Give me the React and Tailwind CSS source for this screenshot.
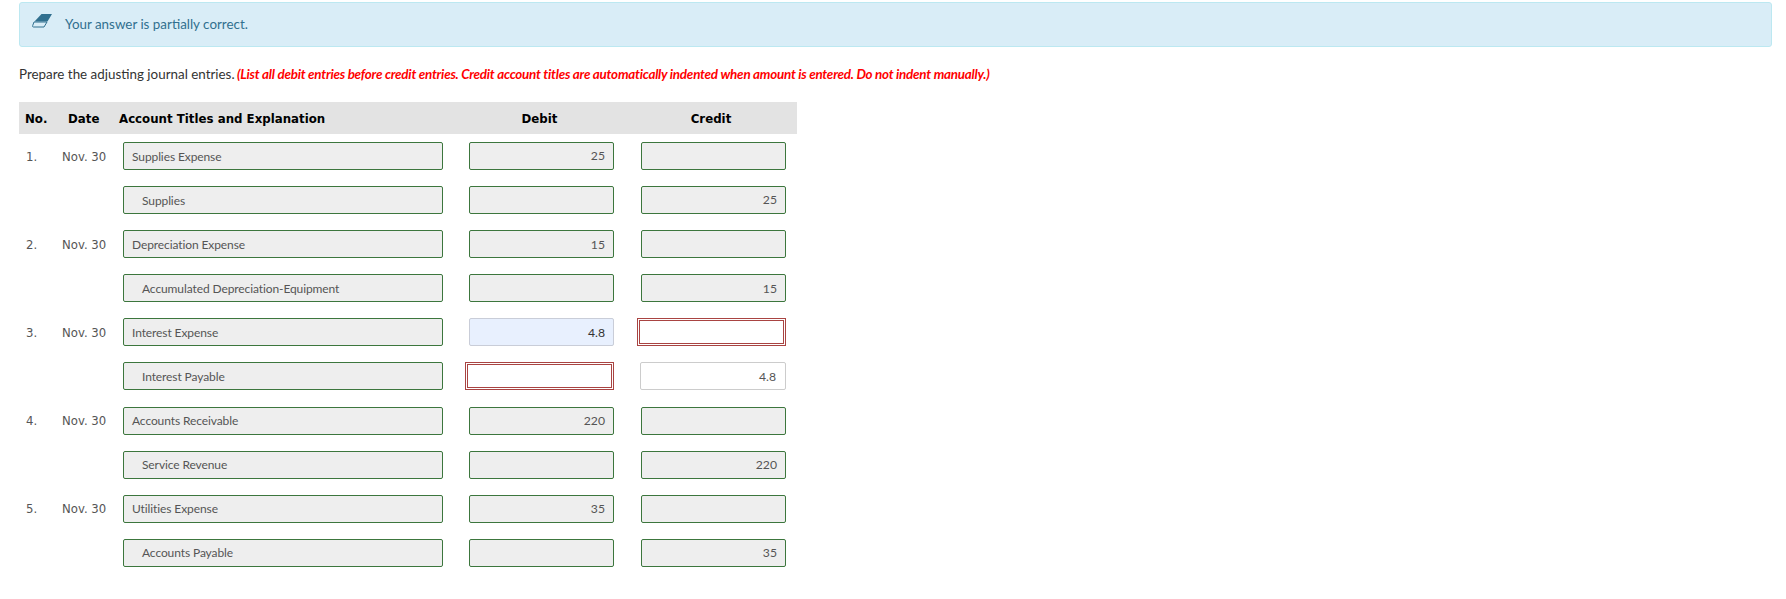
import React from "react";

const rows = [
  { no: "1.", date: "Nov. 30", title: "Supplies Expense", debit: "25", credit: "" },
  { title: "Supplies", indent: true, debit: "", credit: "25" },
  { no: "2.", date: "Nov. 30", title: "Depreciation Expense", debit: "15", credit: "" },
  { title: "Accumulated Depreciation-Equipment", indent: true, debit: "", credit: "15" },
  { no: "3.", date: "Nov. 30", title: "Interest Expense", debit: "4.8", credit: "", debitState: "edited", creditState: "wrong" },
  { title: "Interest Payable", indent: true, debit: "", credit: "4.8", debitState: "wrong", creditState: "plain" },
  { no: "4.", date: "Nov. 30", title: "Accounts Receivable", debit: "220", credit: "" },
  { title: "Service Revenue", indent: true, debit: "", credit: "220" },
  { no: "5.", date: "Nov. 30", title: "Utilities Expense", debit: "35", credit: "" },
  { title: "Accounts Payable", indent: true, debit: "", credit: "35" },
];

function Amount({ value, state }) {
  if (state === "wrong") {
    return <div className="h-[28px] w-[149px] border-[3px] border-double border-[#a94442] bg-white" />;
  }
  if (state === "edited") {
    return (
      <div className="flex h-[28px] w-[145px] items-center justify-end rounded-[2px] border border-[#c9cdd8] bg-[#e8f0fe] pr-[8px] pt-[1px] text-[12.2px] text-[#333]">
        {value}
      </div>
    );
  }
  if (state === "plain") {
    return (
      <div className="flex h-[28px] w-[146px] items-center justify-end rounded-[2px] border border-[#ccc] bg-white pr-[9px] pt-[1px] text-[12.2px] text-[#555]">
        {value}
      </div>
    );
  }
  return (
    <div className="flex h-[28px] w-[145px] items-center justify-end rounded-[2px] border border-[#3c763d] bg-[#eee] pr-[8px] pt-[1px] text-[12.2px] text-[#555]">
      {value}
    </div>
  );
}

export default function App() {
  return (
    <div className="min-h-[599px] bg-white px-[19px] pt-[2px] font-['Lato',sans-serif] text-[#333]">
      <div className="flex h-[45px] w-[1753px] items-center rounded-[3px] border border-[#bce8f1] bg-[#d9edf7] pl-[12px] text-[13.4px] text-[#31708f]">
        <svg width="20" height="14" viewBox="0 0 20 14" className="mr-[13px] mt-[-8px] shrink-0">
          <path d="M9.5 0H20L15.5 7.5H2.5Z" fill="#31708f" />
          <path d="M2 8H15L12 13H1.5Q0.2 13 0.7 11.5Z" fill="none" stroke="#31708f" strokeWidth="1" />
        </svg>
        <span>Your answer is partially correct.</span>
      </div>

      <p className="mt-[17px] h-[20px] text-[13.4px] leading-[20px] whitespace-nowrap">
        Prepare the adjusting journal entries.{" "}
        <em className="ml-[-1px] font-bold tracking-[-0.24px] text-[#ff0000]">
          (List all debit entries before credit entries. Credit account titles are automatically indented when amount is entered. Do not indent manually.)
        </em>
      </p>

      <div className="mt-[18px] w-[778px]">
        <div className="flex h-[32px] items-center bg-[#e3e3e3] pt-[3px] font-['DejaVu_Sans',sans-serif] text-[11.8px] font-bold text-black">
          <span className="w-[49px] pl-[6px]">No.</span>
          <span className="w-[51px]">Date</span>
          <span className="w-[348px]">Account Titles and Explanation</span>
          <span className="w-[145px] text-center">Debit</span>
          <span className="ml-[26px] w-[146px] text-center">Credit</span>
        </div>

        <div className="pt-[8px]">
          {rows.map((row, i) => (
            <div key={i} className="flex h-[44.1px] items-start">
              <div className="flex h-[28px] w-[104px] items-center pt-[3px] font-['DejaVu_Sans',sans-serif] text-[11.7px] text-[#555]">
                <span className="w-[43px] pl-[7px]">{row.no}</span>
                <span>{row.date}</span>
              </div>
              <div
                className={`flex h-[28px] w-[320px] items-center rounded-[2px] border border-[#3c763d] bg-[#eee] pt-[1px] text-[12px] tracking-[-0.1px] text-[#555] ${
                  row.indent ? "pl-[18px]" : "pl-[8px]"
                }`}
              >
                {row.title}
              </div>
              <div className="flex w-[171px] justify-end">
                <Amount value={row.debit} state={row.debitState} />
              </div>
              <div className="flex w-[172px] justify-end">
                <Amount value={row.credit} state={row.creditState} />
              </div>
            </div>
          ))}
        </div>
      </div>
    </div>
  );
}
